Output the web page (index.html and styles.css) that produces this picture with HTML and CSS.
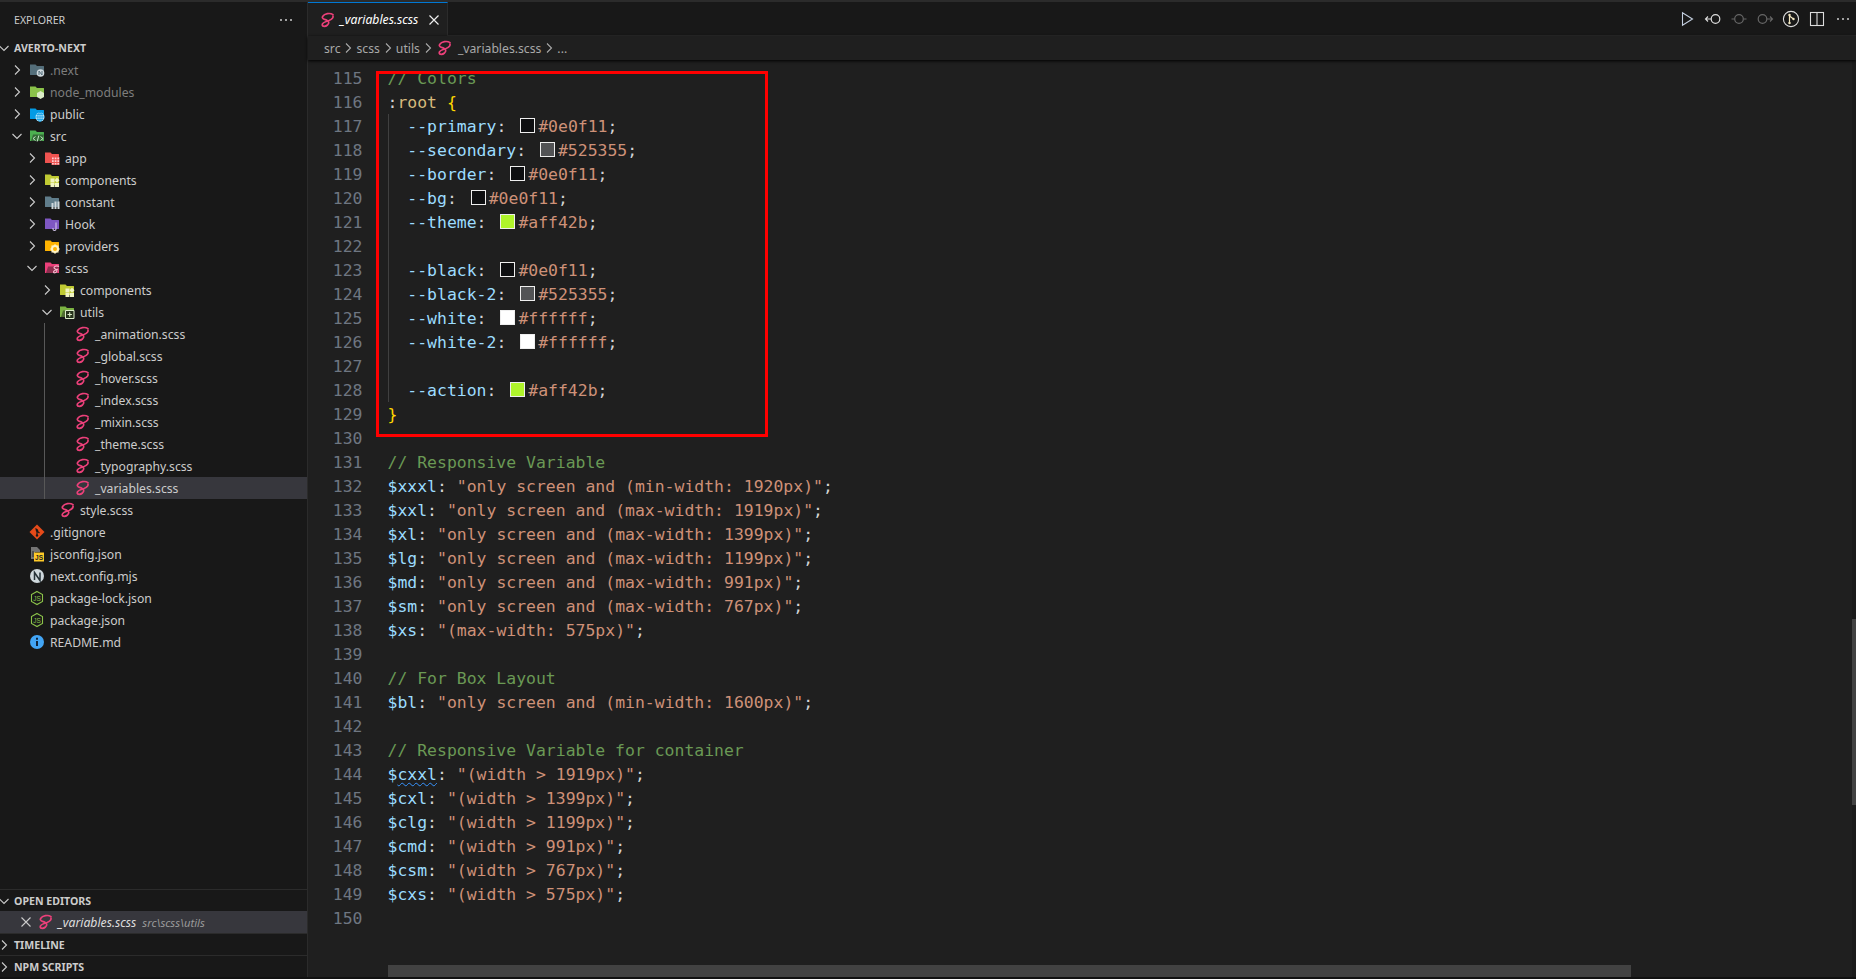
FILE: index.html
```html
<!DOCTYPE html>
<html lang="en">
<head>
    <meta charset="UTF-8">
    <title>_variables.scss - averto-next</title>
    <link rel="stylesheet" href="styles.css">
</head>
<body>
    <svg class="defs" width="0" height="0">
        <symbol id="chev-r" viewBox="0 0 16 16"><path d="M6 3.500 10.500 8 6 12.500" fill="none" stroke="currentColor" stroke-width="1.100"/></symbol>
        <symbol id="chev-d" viewBox="0 0 16 16"><path d="M3.500 6 8 10.500 12.500 6" fill="none" stroke="currentColor" stroke-width="1.100"/></symbol>
        <symbol id="sass" viewBox="0 0 16 16"><path d="M14 2.600C11 .6 5.500 1.500 3.600 4.500 2.400 6.500 5 7.200 7.500 8c2.500 1 3 3 1 5-2 1.800-5 1.800-5.300 0-.2-2 3.300-3.500 6.800-4.500 2.500-1 4.500-2.500 4-4.500" fill="none" stroke="#ec407a" stroke-width="1.700" stroke-linecap="round"/></symbol>
        <symbol id="folder" viewBox="0 0 16 16"><path d="M1 2.500h5.500l1.500 1.500h6.500a.5.5 0 0 1 .5.500v8a.5.5 0 0 1-.5.500h-13a.5.5 0 0 1-.5-.5z" fill="currentColor"/></symbol>
        <symbol id="folder-open" viewBox="0 0 16 16"><path d="M1 2.500h5.500l1.500 1.500h6.500a.5.5 0 0 1 .5.500v8.500h-14z" fill="currentColor"/><path d="M4 6.500h11l-2 6.500h-11z" fill="#181818" opacity=".45"/></symbol>
    </svg>

    <div class="app">
        <aside class="sidebar">
            <div class="side-head">
                <span class="side-title">EXPLORER</span>
                <svg class="side-more" width="16" height="16"><circle cx="3" cy="8" r="1" fill="#ccc"/><circle cx="8" cy="8" r="1" fill="#ccc"/><circle cx="13" cy="8" r="1" fill="#ccc"/></svg>
            </div>
            <div class="tree">
                <div class="row root"><svg class="tw"><use href="#chev-d"/></svg><b>AVERTO-NEXT</b></div>

                <div class="row lv1 dim"><svg class="tw"><use href="#chev-r"/></svg>
                    <svg class="ico" viewBox="0 0 16 16"><use href="#folder" color="#546e7a"/><circle cx="11.500" cy="11" r="3.800" fill="#cfd8dc"/><path d="M10 13V9l3 4V9" fill="none" stroke="#546e7a"/></svg>
                    <span>.next</span></div>
                <div class="row lv1 dim"><svg class="tw"><use href="#chev-r"/></svg>
                    <svg class="ico" viewBox="0 0 16 16"><use href="#folder" color="#8bc34a"/><path d="M11.500 7 15 9v4l-3.500 2L8 13V9z" fill="#dcedc8"/></svg>
                    <span>node_modules</span></div>
                <div class="row lv1"><svg class="tw"><use href="#chev-r"/></svg>
                    <svg class="ico" viewBox="0 0 16 16"><use href="#folder" color="#039be5"/><circle cx="11" cy="11" r="4.500" fill="#b3e5fc"/><path d="M6.500 11h9M11 6.500v9M7.500 8.500h7M7.500 13.500h7" stroke="#039be5" stroke-width=".7"/><ellipse cx="11" cy="11" rx="2.200" ry="4.500" fill="none" stroke="#039be5" stroke-width=".7"/></svg>
                    <span>public</span></div>
                <div class="row lv1"><svg class="tw"><use href="#chev-d"/></svg>
                    <svg class="ico" viewBox="0 0 16 16"><use href="#folder-open" color="#4caf50"/><path d="M6.500 8.500 4 10.500l2.500 2M11.500 8.500l2.500 2-2.500 2M9.800 7.500 8.200 13.500" fill="none" stroke="#c8e6c9" stroke-width="1"/></svg>
                    <span>src</span></div>
                <div class="row lv2"><svg class="tw"><use href="#chev-r"/></svg>
                    <svg class="ico" viewBox="0 0 16 16"><use href="#folder" color="#ef5350"/><path d="M7.500 7h8v8h-8z" fill="#ef5350"/><path d="M8 7.500h1.700v1.700H8zM10.700 7.500h1.700v1.700h-1.700zM13.400 7.500h1.700v1.700h-1.700zM8 10.200h1.700v1.700H8zM10.700 10.200h1.700v1.700h-1.700zM13.400 10.200h1.700v1.700h-1.700zM8 12.900h1.700v1.700H8zM10.700 12.900h1.700v1.700h-1.700zM13.400 12.900h1.700v1.700h-1.700z" fill="#ffcdd2"/></svg>
                    <span>app</span></div>
                <div class="row lv2"><svg class="tw"><use href="#chev-r"/></svg>
                    <svg class="ico" viewBox="0 0 16 16"><use href="#folder" color="#c0ca33"/><path d="M6.500 6.500h4v4h-4zM6.500 11h4v4h-4zM11 11h4v4h-4z" fill="#f0f4c3"/><path d="M13 5.800l2.500 2.500-2.500 2.500-2.500-2.500z" fill="#f0f4c3"/></svg>
                    <span>components</span></div>
                <div class="row lv2"><svg class="tw"><use href="#chev-r"/></svg>
                    <svg class="ico" viewBox="0 0 16 16"><use href="#folder" color="#607d8b"/><path d="M7.500 9h2v6h-2zM10.500 7.500h2V15h-2zM13.500 7.500h2V15h-2z" fill="#cfd8dc"/></svg>
                    <span>constant</span></div>
                <div class="row lv2"><svg class="tw"><use href="#chev-r"/></svg>
                    <svg class="ico" viewBox="0 0 16 16"><use href="#folder" color="#7e57c2"/><path d="M12 6.500v6.500a1.500 1.500 0 0 1-3 0v-1" fill="none" stroke="#d1c4e9" stroke-width="1.100"/></svg>
                    <span>Hook</span></div>
                <div class="row lv2"><svg class="tw"><use href="#chev-r"/></svg>
                    <svg class="ico" viewBox="0 0 16 16"><use href="#folder" color="#ffb300"/><circle cx="11" cy="11" r="3" fill="none" stroke="#fff3c4" stroke-width="2"/><path d="M11 6.200v2M11 13.800v2M6.200 11h2M13.800 11h2M7.600 7.600 9 9M13 13l1.400 1.400M14.400 7.600 13 9M9 13l-1.400 1.400" stroke="#fff3c4" stroke-width="1.200"/></svg>
                    <span>providers</span></div>
                <div class="row lv2"><svg class="tw"><use href="#chev-d"/></svg>
                    <svg class="ico" viewBox="0 0 16 16"><use href="#folder-open" color="#ec407a"/><path d="M15 6.500c-1.700-1-4.500-.6-5 1 -.4 1.200 2 1.500 2.700 2.400.8 1.200-.3 2.700-1.800 2.900-1.300.2-1.800-.8-1-1.700.9-1 2.700-1.700 4-2" fill="none" stroke="#f8bbd0" stroke-width="1.100"/></svg>
                    <span>scss</span></div>
                <div class="row lv3"><svg class="tw"><use href="#chev-r"/></svg>
                    <svg class="ico" viewBox="0 0 16 16"><use href="#folder" color="#c0ca33"/><path d="M6.500 6.500h4v4h-4zM6.500 11h4v4h-4zM11 11h4v4h-4z" fill="#f0f4c3"/><path d="M13 5.800l2.500 2.500-2.500 2.500-2.500-2.500z" fill="#f0f4c3"/></svg>
                    <span>components</span></div>
                <div class="row lv3"><svg class="tw"><use href="#chev-d"/></svg>
                    <svg class="ico" viewBox="0 0 16 16"><use href="#folder-open" color="#7cb342"/><path d="M6.500 6.500h8.500v8h-8.500z" fill="#27331b" stroke="#dcedc8"/><path d="M10.700 8.300v4.400M8.500 10.500h4.400" stroke="#dcedc8" stroke-width="1.100"/></svg>
                    <span>utils</span></div>

                <div class="guide-wrap">
                    <div class="row lv4"><span class="tw"></span><svg class="ico"><use href="#sass"/></svg><span>_animation.scss</span></div>
                    <div class="row lv4"><span class="tw"></span><svg class="ico"><use href="#sass"/></svg><span>_global.scss</span></div>
                    <div class="row lv4"><span class="tw"></span><svg class="ico"><use href="#sass"/></svg><span>_hover.scss</span></div>
                    <div class="row lv4"><span class="tw"></span><svg class="ico"><use href="#sass"/></svg><span>_index.scss</span></div>
                    <div class="row lv4"><span class="tw"></span><svg class="ico"><use href="#sass"/></svg><span>_mixin.scss</span></div>
                    <div class="row lv4"><span class="tw"></span><svg class="ico"><use href="#sass"/></svg><span>_theme.scss</span></div>
                    <div class="row lv4"><span class="tw"></span><svg class="ico"><use href="#sass"/></svg><span>_typography.scss</span></div>
                    <div class="row lv4 active"><span class="tw"></span><svg class="ico"><use href="#sass"/></svg><span>_variables.scss</span></div>
                </div>
                <div class="row lv3"><span class="tw"></span><svg class="ico"><use href="#sass"/></svg><span>style.scss</span></div>

                <div class="row lv1"><span class="tw"></span>
                    <svg class="ico" viewBox="0 0 16 16"><path d="M8 .5 15.500 8 8 15.500.5 8z" fill="#e64a19"/><path d="M6.500 4.500 8 6v6M8 7l2.500 2" fill="none" stroke="#181818" stroke-width="1.200"/><circle cx="8" cy="6.500" r="1.200" fill="#181818"/><circle cx="8" cy="11.500" r="1.200" fill="#181818"/></svg>
                    <span>.gitignore</span></div>
                <div class="row lv1"><span class="tw"></span>
                    <svg class="ico" viewBox="0 0 16 16"><path d="M2 1h6l3 3v2H6v7H2z" fill="#757575"/><path d="M3 6h2M3 8h2M3 10h2" stroke="#181818" stroke-width=".8"/><rect x="5" y="6.500" width="10" height="9" fill="#ffca28"/><text x="10" y="14" text-anchor="middle" font-size="6.500" font-weight="700" font-family="Liberation Sans" fill="#222">JS</text></svg>
                    <span>jsconfig.json</span></div>
                <div class="row lv1"><span class="tw"></span>
                    <svg class="ico" viewBox="0 0 16 16"><circle cx="8" cy="8" r="7" fill="#cfd8dc"/><path d="M5.500 12V4.500l5.500 8V4.500" fill="none" stroke="#263238" stroke-width="1.500"/></svg>
                    <span>next.config.mjs</span></div>
                <div class="row lv1"><span class="tw"></span>
                    <svg class="ico" viewBox="0 0 16 16"><path d="M8 1.500 13.500 4.600v6.800L8 14.500 2.500 11.400V4.600z" fill="none" stroke="#8bc34a" stroke-width="1.100"/><text x="8" y="10.800" text-anchor="middle" font-size="6.500" font-family="Liberation Sans" fill="#8bc34a">JS</text></svg>
                    <span>package-lock.json</span></div>
                <div class="row lv1"><span class="tw"></span>
                    <svg class="ico" viewBox="0 0 16 16"><path d="M8 1.500 13.500 4.600v6.800L8 14.500 2.500 11.400V4.600z" fill="none" stroke="#8bc34a" stroke-width="1.100"/><text x="8" y="10.800" text-anchor="middle" font-size="6.500" font-family="Liberation Sans" fill="#8bc34a">JS</text></svg>
                    <span>package.json</span></div>
                <div class="row lv1"><span class="tw"></span>
                    <svg class="ico" viewBox="0 0 16 16"><circle cx="8" cy="8" r="7" fill="#42a5f5"/><path d="M7 7h2v5H7zM7 3.800h2v2H7z" fill="#10233a"/></svg>
                    <span>README.md</span></div>
            </div>

            <div class="sec-head"><svg class="tw"><use href="#chev-d"/></svg><b>OPEN EDITORS</b></div>
            <div class="open-row">
                <svg class="open-x" width="16" height="16"><path d="M3.500 3.500l9 9M12.500 3.500l-9 9" stroke="#ccc" stroke-width="1.100"/></svg>
                <svg class="ico"><use href="#sass"/></svg>
                <span class="open-name">_variables.scss</span>
                <span class="open-path">src\scss\utils</span>
            </div>
            <div class="sec-head"><svg class="tw"><use href="#chev-r"/></svg><b>TIMELINE</b></div>
            <div class="sec-head"><svg class="tw"><use href="#chev-r"/></svg><b>NPM SCRIPTS</b></div>
        </aside>

        <main class="editor">
            <div class="tabbar">
                <div class="tab">
                    <svg class="ico"><use href="#sass"/></svg>
                    <span class="tab-name">_variables.scss</span>
                    <svg class="tab-x" width="16" height="16"><path d="M3.500 3.500l9 9M12.500 3.500l-9 9" stroke="#eee" stroke-width="1.200"/></svg>
                </div>
                <div class="actions">
                    <svg width="20" height="20" viewBox="0 0 20 20"><path d="M5.500 3.800v12.400l10-6.200z" fill="none" stroke="#c5d0e0" stroke-width="1.100"/></svg>
                    <svg width="20" height="20" viewBox="0 0 20 20"><circle cx="12.500" cy="10" r="4.300" fill="none" stroke="#ddd" stroke-width="1.200"/><path d="M8 10H2.500M5 7.500 2.500 10 5 12.500" fill="none" stroke="#ddd" stroke-width="1.100"/></svg>
                    <svg width="20" height="20" viewBox="0 0 20 20"><circle cx="10" cy="10" r="4.300" fill="none" stroke="#666" stroke-width="1.200"/><path d="M2.500 10h3M14.500 10h3" stroke="#666" stroke-width="1.100"/></svg>
                    <svg width="20" height="20" viewBox="0 0 20 20"><circle cx="7.500" cy="10" r="4.300" fill="none" stroke="#666" stroke-width="1.200"/><path d="M12 10h5.500M15 7.500l2.500 2.500-2.500 2.500" fill="none" stroke="#666" stroke-width="1.100"/></svg>
                    <svg width="20" height="20" viewBox="0 0 20 20"><circle cx="10" cy="10" r="7.600" fill="none" stroke="#ddd" stroke-width="1.100"/><path d="M8.500 5v10M8.500 7l4 3" fill="none" stroke="#f2e6c0" stroke-width="1.200"/><circle cx="8.500" cy="6" r="1.200" fill="#f2e6c0"/><circle cx="12.500" cy="10" r="1.200" fill="#f2e6c0"/><circle cx="8.500" cy="14" r="1.200" fill="#f2e6c0"/></svg>
                    <svg width="20" height="20" viewBox="0 0 20 20"><rect x="3.500" y="3.500" width="13" height="13" fill="none" stroke="#ddd" stroke-width="1.100"/><path d="M10 3.500v13" stroke="#ddd" stroke-width="1.100"/></svg>
                    <svg width="20" height="20" viewBox="0 0 20 20"><circle cx="5" cy="10" r="1" fill="#ccc"/><circle cx="10" cy="10" r="1" fill="#ccc"/><circle cx="15" cy="10" r="1" fill="#ccc"/></svg>
                </div>
            </div>
            <div class="crumbs">
                <span>src</span><svg class="sep"><use href="#chev-r"/></svg>
                <span>scss</span><svg class="sep"><use href="#chev-r"/></svg>
                <span>utils</span><svg class="sep"><use href="#chev-r"/></svg>
                <svg class="ico crumb-ico"><use href="#sass"/></svg>
                <span>_variables.scss</span><svg class="sep"><use href="#chev-r"/></svg>
                <span>...</span>
            </div>
            <div class="code-area">
                <div class="code">
<div class="line"><i>115</i><code><span class="c">// Colors</span></code></div>
<div class="line"><i>116</i><code><span class="p">:</span><span class="s">root</span> <span class="b">{</span></code></div>
<div class="line"><i>117</i><code class="g">  <span class="v">--primary</span><span class="p">:</span> <em class="sw sw-dark"></em><span class="t">#0e0f11</span><span class="p">;</span></code></div>
<div class="line"><i>118</i><code class="g">  <span class="v">--secondary</span><span class="p">:</span> <em class="sw sw-grey"></em><span class="t">#525355</span><span class="p">;</span></code></div>
<div class="line"><i>119</i><code class="g">  <span class="v">--border</span><span class="p">:</span> <em class="sw sw-dark"></em><span class="t">#0e0f11</span><span class="p">;</span></code></div>
<div class="line"><i>120</i><code class="g">  <span class="v">--bg</span><span class="p">:</span> <em class="sw sw-dark"></em><span class="t">#0e0f11</span><span class="p">;</span></code></div>
<div class="line"><i>121</i><code class="g">  <span class="v">--theme</span><span class="p">:</span> <em class="sw sw-lime"></em><span class="t">#aff42b</span><span class="p">;</span></code></div>
<div class="line"><i>122</i><code class="g"></code></div>
<div class="line"><i>123</i><code class="g">  <span class="v">--black</span><span class="p">:</span> <em class="sw sw-dark"></em><span class="t">#0e0f11</span><span class="p">;</span></code></div>
<div class="line"><i>124</i><code class="g">  <span class="v">--black-2</span><span class="p">:</span> <em class="sw sw-grey"></em><span class="t">#525355</span><span class="p">;</span></code></div>
<div class="line"><i>125</i><code class="g">  <span class="v">--white</span><span class="p">:</span> <em class="sw sw-white"></em><span class="t">#ffffff</span><span class="p">;</span></code></div>
<div class="line"><i>126</i><code class="g">  <span class="v">--white-2</span><span class="p">:</span> <em class="sw sw-white"></em><span class="t">#ffffff</span><span class="p">;</span></code></div>
<div class="line"><i>127</i><code class="g"></code></div>
<div class="line"><i>128</i><code class="g">  <span class="v">--action</span><span class="p">:</span> <em class="sw sw-lime"></em><span class="t">#aff42b</span><span class="p">;</span></code></div>
<div class="line"><i>129</i><code><span class="b">}</span></code></div>
<div class="line"><i>130</i><code></code></div>
<div class="line"><i>131</i><code><span class="c">// Responsive Variable</span></code></div>
<div class="line"><i>132</i><code><span class="v">$xxxl</span><span class="p">:</span> <span class="t">"only screen and (min-width: 1920px)"</span><span class="p">;</span></code></div>
<div class="line"><i>133</i><code><span class="v">$xxl</span><span class="p">:</span> <span class="t">"only screen and (max-width: 1919px)"</span><span class="p">;</span></code></div>
<div class="line"><i>134</i><code><span class="v">$xl</span><span class="p">:</span> <span class="t">"only screen and (max-width: 1399px)"</span><span class="p">;</span></code></div>
<div class="line"><i>135</i><code><span class="v">$lg</span><span class="p">:</span> <span class="t">"only screen and (max-width: 1199px)"</span><span class="p">;</span></code></div>
<div class="line"><i>136</i><code><span class="v">$md</span><span class="p">:</span> <span class="t">"only screen and (max-width: 991px)"</span><span class="p">;</span></code></div>
<div class="line"><i>137</i><code><span class="v">$sm</span><span class="p">:</span> <span class="t">"only screen and (max-width: 767px)"</span><span class="p">;</span></code></div>
<div class="line"><i>138</i><code><span class="v">$xs</span><span class="p">:</span> <span class="t">"(max-width: 575px)"</span><span class="p">;</span></code></div>
<div class="line"><i>139</i><code></code></div>
<div class="line"><i>140</i><code><span class="c">// For Box Layout</span></code></div>
<div class="line"><i>141</i><code><span class="v">$bl</span><span class="p">:</span> <span class="t">"only screen and (min-width: 1600px)"</span><span class="p">;</span></code></div>
<div class="line"><i>142</i><code></code></div>
<div class="line"><i>143</i><code><span class="c">// Responsive Variable for container</span></code></div>
<div class="line"><i>144</i><code><span class="v">$<span class="wavy">cxxl</span></span><span class="p">:</span> <span class="t">"(width &gt; 1919px)"</span><span class="p">;</span></code></div>
<div class="line"><i>145</i><code><span class="v">$cxl</span><span class="p">:</span> <span class="t">"(width &gt; 1399px)"</span><span class="p">;</span></code></div>
<div class="line"><i>146</i><code><span class="v">$clg</span><span class="p">:</span> <span class="t">"(width &gt; 1199px)"</span><span class="p">;</span></code></div>
<div class="line"><i>147</i><code><span class="v">$cmd</span><span class="p">:</span> <span class="t">"(width &gt; 991px)"</span><span class="p">;</span></code></div>
<div class="line"><i>148</i><code><span class="v">$csm</span><span class="p">:</span> <span class="t">"(width &gt; 767px)"</span><span class="p">;</span></code></div>
<div class="line"><i>149</i><code><span class="v">$cxs</span><span class="p">:</span> <span class="t">"(width &gt; 575px)"</span><span class="p">;</span></code></div>
<div class="line"><i>150</i><code></code></div>
                </div>
                <div class="redbox"></div>
                <div class="vtrack"><div class="vthumb"></div></div>
                <div class="hscroll"></div>
            </div>
        </main>
    </div>
</body>
</html>
```

FILE: styles.css
```css
* {
    box-sizing: border-box;
}
html, body {
    margin: 0;
    height: 100%;
    overflow: hidden;
}
body {
    background: #181818;
    color: #cccccc;
    font-family: "Noto Sans", sans-serif;
    font-size: 12.2px;
}
.defs {
    position: absolute;
}
.app {
    display: grid;
    grid-template-columns: 308px 1fr;
    height: 979px;
    border-top: 2px solid #2b2b2b;
    border-bottom: 2px solid #111;
}

/* sidebar */
.sidebar {
    display: flex;
    flex-direction: column;
    border-right: 1px solid #2b2b2b;
    background: #181818;
}
.side-head {
    display: flex;
    align-items: center;
    justify-content: space-between;
    height: 35px;
    padding: 0 14px;
    flex: none;
}
.side-title {
    font-size: 10.6px;
}
.side-more {
    margin-right: -1px;
}
.tree {
    flex: 1;
    overflow: hidden;
}
.row {
    display: flex;
    align-items: center;
    height: 22px;
    white-space: nowrap;
}
.row b, .sec-head b {
    font-size: 10.6px;
    font-weight: 700;
}
.tw {
    width: 16px;
    height: 16px;
    flex: none;
    margin-right: 4px;
    color: #cccccc;
}
.ico {
    width: 16px;
    height: 16px;
    flex: none;
    margin-right: 5px;
}
.root {
    margin-left: -4px;
}
.root .tw {
    margin-right: 2px;
}
.lv1 { padding-left: 9px; }
.lv2 { padding-left: 24px; }
.lv3 { padding-left: 39px; }
.lv4 { padding-left: 54px; }
.dim span {
    color: #7d7d7d;
}
.active {
    background: #37373d;
}
.guide-wrap {
    position: relative;
}
.guide-wrap::before {
    content: "";
    position: absolute;
    left: 44px;
    top: 0;
    bottom: 0;
    width: 1px;
    background: #585858;
}
.sec-head {
    display: flex;
    align-items: center;
    height: 22px;
    flex: none;
    border-top: 1px solid #2b2b2b;
}
.sec-head .tw {
    margin-left: -4px;
    margin-right: 2px;
}
.open-row {
    display: flex;
    align-items: center;
    height: 22px;
    flex: none;
    background: #37373d;
    padding-left: 18px;
    white-space: nowrap;
}
.open-x {
    margin-right: 3px;
    flex: none;
}
.open-row .ico {
    margin-right: 4px;
}
.open-name {
    font-style: italic;
    color: #dddddd;
    margin-left: 1px;
}
.open-path {
    font-style: italic;
    font-size: 11.2px;
    color: #9a9a9a;
    margin-left: 6px;
}

/* editor */
.editor {
    display: flex;
    flex-direction: column;
    min-width: 0;
    background: #1f1f1f;
}
.tabbar {
    display: flex;
    justify-content: space-between;
    height: 34px;
    flex: none;
    background: #181818;
    border-bottom: 1px solid #2b2b2b;
}
.tab {
    display: flex;
    align-items: center;
    width: 140px;
    height: 34px;
    padding-left: 11px;
    background: #1f1f1f;
    border-top: 1px solid #0078d4;
    border-right: 1px solid #2b2b2b;
}
.tab .ico {
    margin-right: 5px;
}
.tab-name {
    font-style: italic;
    color: #ffffff;
    white-space: nowrap;
}
.tab-x {
    margin-left: auto;
    margin-right: 5px;
    flex: none;
}
.actions {
    display: flex;
    align-items: center;
    gap: 6px;
    padding-right: 3px;
}
.crumbs {
    display: flex;
    align-items: center;
    height: 24px;
    flex: none;
    padding-left: 16px;
    color: #a9a9a9;
    box-shadow: 0 1px 3px #000;
    position: relative;
    z-index: 2;
    background: #1f1f1f;
}
.sep {
    width: 16px;
    height: 16px;
    color: #a9a9a9;
    flex: none;
}
.crumb-ico {
    margin-right: 6px;
}
.code-area {
    position: relative;
    flex: 1;
    overflow: hidden;
}
.code {
    margin-top: 6px;
    font-family: "DejaVu Sans Mono", monospace;
    font-size: 16.44px;
}
.line {
    display: flex;
    height: 24px;
    line-height: 26px;
    white-space: pre;
}
.line i {
    font-style: normal;
    width: 54.5px;
    flex: none;
    text-align: right;
    color: #6e7681;
}
.line code {
    font: inherit;
    margin-left: 25px;
    flex: 1;
    color: #d4d4d4;
}
.line code.g {
    box-shadow: inset 1px 0 0 #404040;
}
.c { color: #6a9955; }
.s { color: #d7ba7d; }
.b { color: #ffd700; }
.v { color: #9cdcfe; }
.t { color: #ce9178; }
.p { color: #d4d4d4; }
.wavy {
    text-decoration: underline wavy #3794ff 1px;
    text-underline-offset: 2px;
}
.sw {
    display: inline-block;
    width: 15px;
    height: 15px;
    margin: 0 3px 0 4px;
    border: 1px solid #eeeeee;
    vertical-align: -1px;
}
.sw-dark { background: #0e0f11; }
.sw-grey { background: #525355; }
.sw-lime { background: #aff42b; }
.sw-white { background: #ffffff; }

/* overlays on the code */
.redbox {
    position: absolute;
    left: 68px;
    top: 11px;
    width: 392px;
    height: 366px;
    border: 3px solid #ff0000;
}
.vtrack {
    position: absolute;
    right: 0;
    top: 0;
    bottom: 0;
    width: 4px;
    background: #1b1b1b;
}
.vthumb {
    margin-top: 559px;
    height: 186px;
    background: #424242;
}
.hscroll {
    position: absolute;
    left: 80px;
    bottom: 0;
    width: 1243px;
    height: 12px;
    background: #424242;
}
```
